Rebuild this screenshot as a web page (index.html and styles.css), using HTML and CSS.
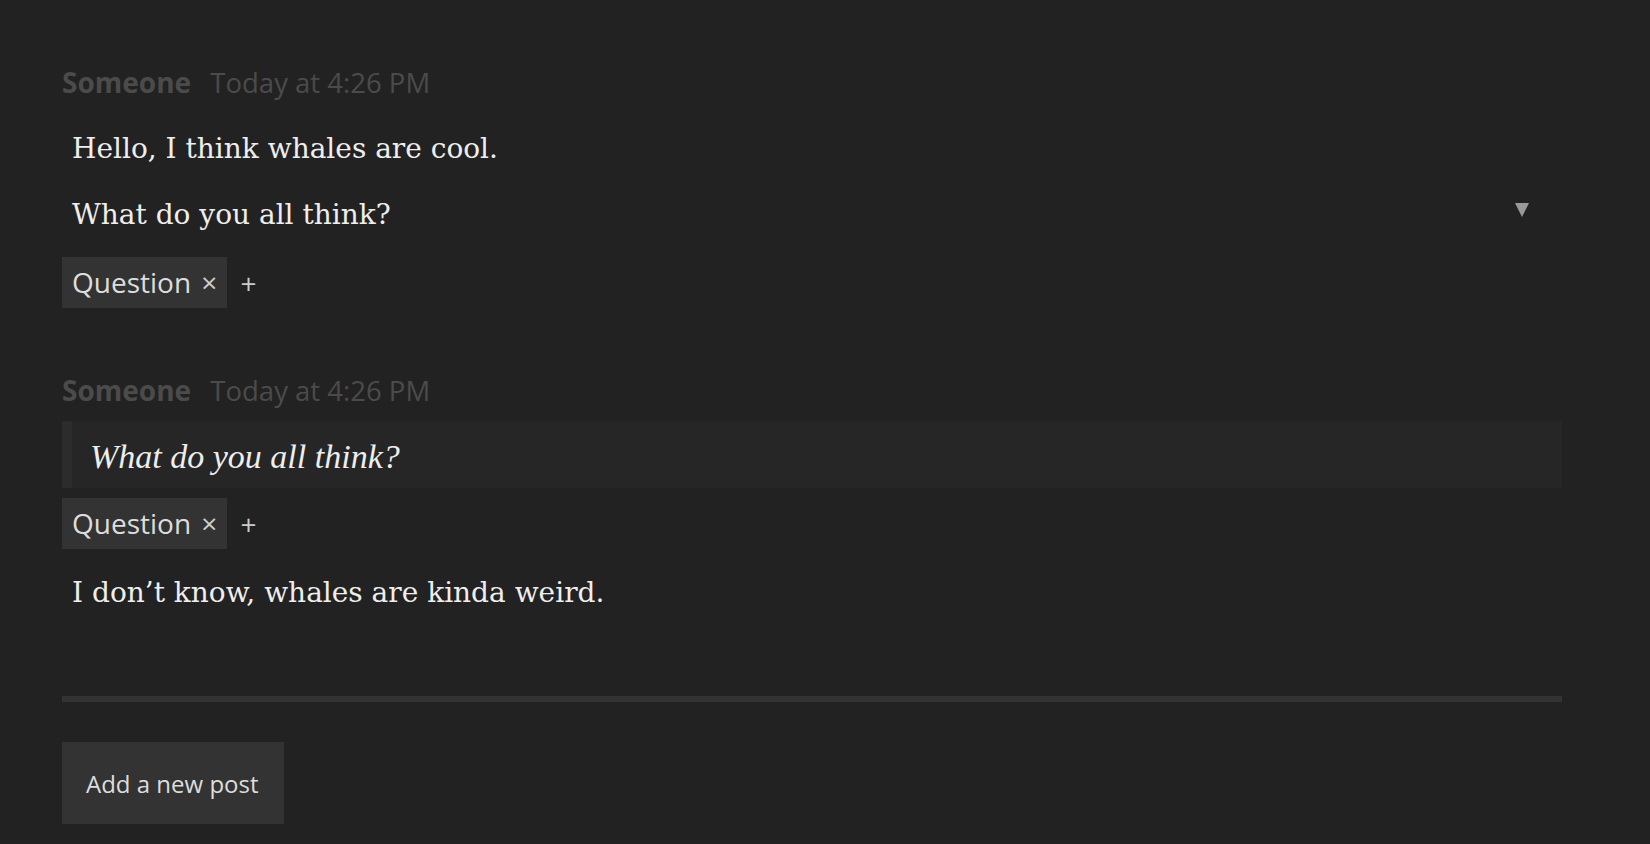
FILE: index.html
```html
<!DOCTYPE html>
<html lang="en">
<head>
<meta charset="utf-8">
<title>Thread</title>
<link rel="stylesheet" href="styles.css">
</head>
<body>
<main class="thread">
  <article class="post">
    <header class="post-header">
      <span class="author">Someone</span>
      <span class="time">Today at 4:26 PM</span>
    </header>
    <p class="text first">Hello, I think whales are cool.</p>
    <div class="text-row">
      <p class="text">What do you all think?</p>
      <button class="toggle" aria-label="Options">
        <svg width="14" height="14" viewBox="0 0 14 14"><polygon points="0,0 14,0 7,14" fill="#999999"/></svg>
      </button>
    </div>
    <div class="tags">
      <span class="tag">Question <span class="remove">×</span></span>
      <span class="add">+</span>
    </div>
  </article>

  <article class="post reply">
    <header class="post-header">
      <span class="author">Someone</span>
      <span class="time">Today at 4:26 PM</span>
    </header>
    <blockquote class="quote">What do you all think?</blockquote>
    <div class="tags tight">
      <span class="tag">Question <span class="remove">×</span></span>
      <span class="add">+</span>
    </div>
    <p class="text answer">I don’t know, whales are kinda weird.</p>
  </article>

  <hr class="separator">

  <button class="new-post">Add a new post</button>
</main>
</body>
</html>
```

FILE: styles.css
```css
html, body {
  margin: 0;
  padding: 0;
  background: #222222;
}

body {
  font-family: "Open Sans", "Noto Sans", sans-serif;
  color: #eeeeee;
}

.thread {
  width: 1500px;
  padding: 62px 0 0 62px;
  display: flex;
  flex-direction: column;
  align-items: flex-start;
}

.post {
  width: 100%;
  display: flex;
  flex-direction: column;
}

.reply {
  margin-top: 62px;
}

.post-header {
  height: 40px;
  font-size: 28px;
  line-height: 40px;
  color: #4b4b4b;
  white-space: nowrap;
}

.author {
  font-weight: 700;
}

.time {
  margin-left: 12px;
  font-size: 27.5px;
}

.text {
  margin: 0;
  padding-left: 10px;
  font-family: "DejaVu Serif", serif;
  font-size: 28px;
  line-height: 40px;
  color: #eeeeee;
}

.text.first {
  margin-top: 27px;
}

.text-row {
  margin-top: 26px;
  display: flex;
  justify-content: space-between;
  align-items: flex-start;
}

.toggle {
  margin: 8px 33px 0 0;
  padding: 0;
  border: 0;
  background: none;
  width: 14px;
  height: 14px;
  display: flex;
}

.tags {
  margin-top: 22px;
  display: flex;
  align-items: center;
}

.tags.tight {
  margin-top: 10px;
}

.tag {
  background: #333333;
  color: #dddddd;
  font-size: 28px;
  line-height: 51px;
  padding: 0 10px;
  white-space: nowrap;
}

.remove {
  margin-left: 3px;
  color: #cccccc;
}

.add {
  margin-left: 13px;
  font-size: 28px;
  color: #cccccc;
}

.quote {
  margin: 11px 0 0 0;
  padding: 16px 0 11px 18px;
  border-left: 10px solid #2c2c2c;
  background: #262626;
  font-family: "Liberation Serif", serif;
  font-style: italic;
  font-size: 34px;
  line-height: 40px;
  color: #eeeeee;
}

.answer {
  margin-top: 24px;
}

.separator {
  width: 100%;
  margin: 83px 0 0 0;
  height: 6px;
  border: 0;
  background: #333333;
}

.new-post {
  margin-top: 40px;
  height: 82px;
  padding: 0 25px 0 24px;
  border: 0;
  background: #333333;
  color: #dddddd;
  font-family: "Open Sans", "Noto Sans", sans-serif;
  font-size: 24px;
}
```
